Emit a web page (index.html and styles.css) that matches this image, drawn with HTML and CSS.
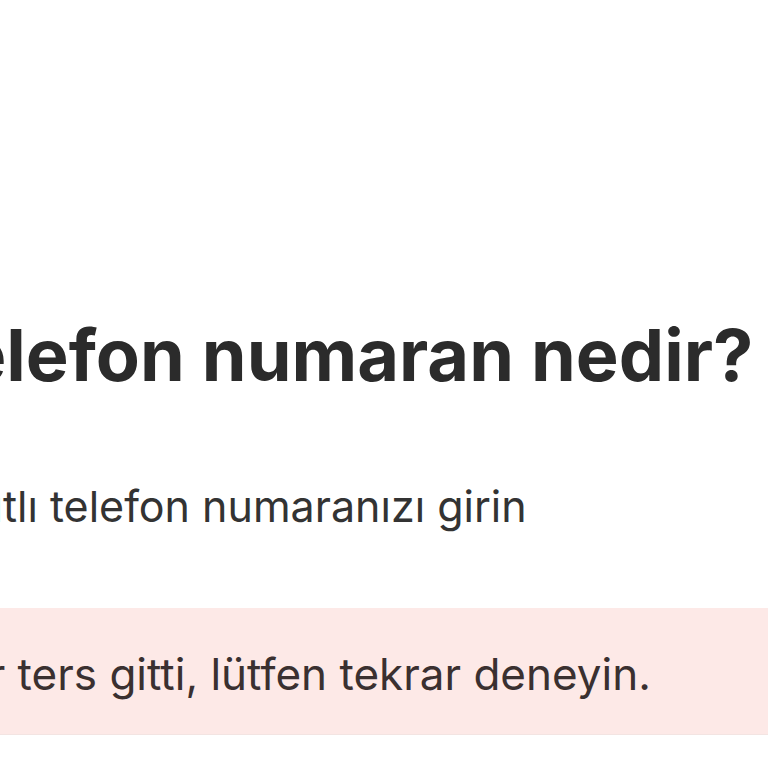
FILE: index.html
```html
<!DOCTYPE html>
<html lang="tr">
<head>
    <meta charset="UTF-8">
    <meta name="viewport" content="width=device-width, initial-scale=1.0">
    <title>Telefon numarası</title>
    <link rel="stylesheet" href="styles.css">
</head>
<body>
    <div class="step">
        <h1 class="title">Telefon numaran nedir?</h1>
        <p class="hint">Kayıtlı telefon numaranızı girin</p>
    </div>
    <div class="alert">
        <p class="alert-text">Bir şeyler ters gitti, lütfen tekrar deneyin.</p>
    </div>
</body>
</html>
```

FILE: styles.css
```css
body {
    font-family: Inter, "Noto Sans", sans-serif;
    margin: 0;
    padding: 0;
    background-color: #fff;
    overflow: hidden;
    height: 100vh;
}

.step {
    padding-top: 313px;
}

.title {
    margin: 0 0 0 -79px;
    font-size: 72px;
    line-height: 84px;
    font-weight: 700;
    color: #2b2b2b;
    white-space: nowrap;
}

.hint {
    margin: 81px 0 0 -84px;
    font-size: 43px;
    line-height: 57px;
    color: #333;
    white-space: nowrap;
}

.alert {
    margin-top: 73px;
    height: 127px;
    box-sizing: border-box;
    padding-top: 41px;
    background-color: #fde9e7;
    border-bottom: 1px solid #f3e4e2;
}

.alert-text {
    margin: 0 0 0 -189px;
    font-size: 44px;
    line-height: 50px;
    color: #3a3030;
    white-space: nowrap;
}
```
